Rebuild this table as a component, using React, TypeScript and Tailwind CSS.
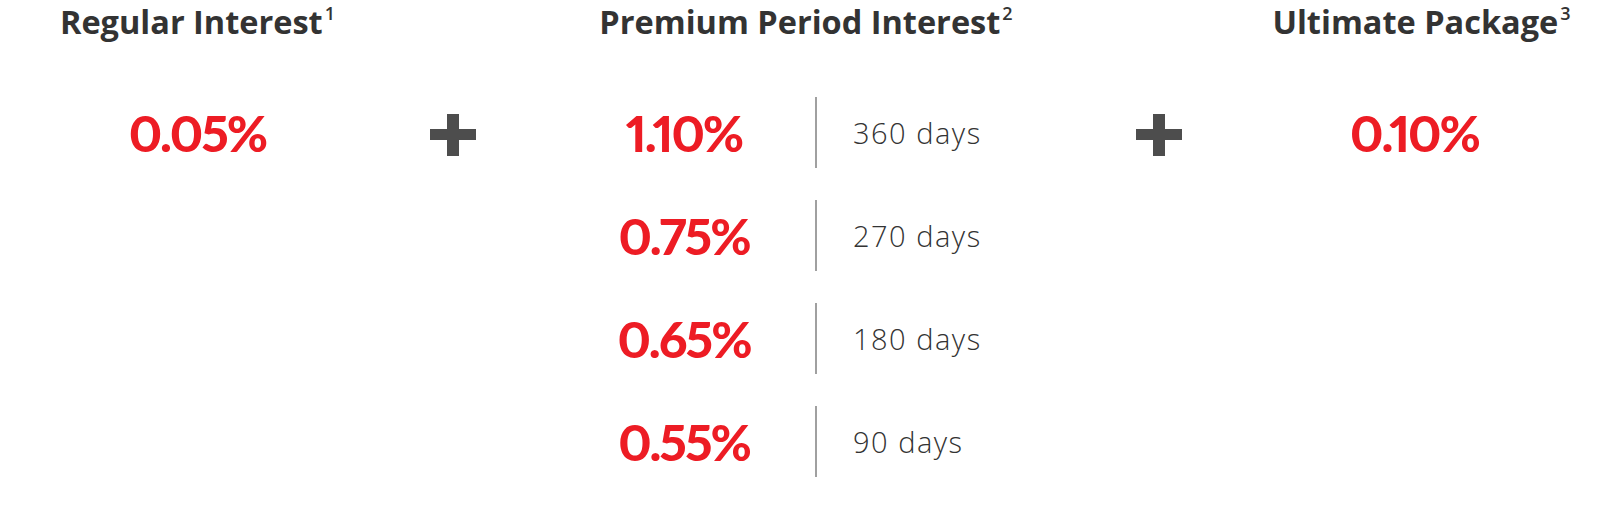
const PERIODS = [
  { rate: '1.10%', days: '360 days' },
  { rate: '0.75%', days: '270 days' },
  { rate: '0.65%', days: '180 days' },
  { rate: '0.55%', days: '90 days' },
]

function Heading({ text, note, className = '' }: { text: string; note: string; className?: string }) {
  return (
    <h2
      className={`whitespace-nowrap text-center font-['Open_Sans',_'Liberation_Sans',_sans-serif] text-[32.5px] font-bold leading-[44px] text-[#333333] ${className}`}
    >
      {text}
      <sup className="top-[-14px] ml-[2px] text-[18px] font-semibold">{note}</sup>
    </h2>
  )
}

function Rate({ value }: { value: string }) {
  return (
    <span className="font-['Lato',_'Liberation_Sans',_sans-serif] text-[50px] font-black leading-none tracking-[-2px] text-[#ed1c24] proportional-nums">
      {value}
    </span>
  )
}

function Plus() {
  return (
    <div className="flex justify-center pt-[114px]">
      <svg width="46" height="42" viewBox="0 0 46 42" className="fill-[#4d4d4d]">
        <rect x="0" y="15" width="46" height="11" />
        <rect x="17" y="0" width="12" height="42" />
      </svg>
    </div>
  )
}

export default function App() {
  return (
    <div className="h-[514px] w-full bg-white">
      <div className="grid grid-cols-[395px_116px_590px_116px_1fr]">
        <div className="flex flex-col items-center">
          <Heading text="Regular Interest" note="1" />
          <div className="mt-[53px] flex h-[71px] items-center">
            <Rate value="0.05%" />
          </div>
        </div>

        <Plus />

        <div className="flex flex-col">
          <Heading text="Premium Period Interest" note="2" />
          <div className="mt-[53px] flex flex-col gap-[32px]">
            {PERIODS.map((p) => (
              <div key={p.days} className="flex h-[71px] items-center pl-[42px]">
                <div className="w-[262px] text-center">
                  <Rate value={p.rate} />
                </div>
                <div className="h-full w-[2px] bg-[#a0a0a0]" />
                <span className="pl-[36px] font-['Open_Sans',_'Liberation_Sans',_sans-serif] text-[29px] font-light tracking-[1.5px] text-[#333333]">
                  {p.days}
                </span>
              </div>
            ))}
          </div>
        </div>

        <Plus />

        <div className="flex flex-col items-center">
          <Heading text="Ultimate Package" note="3" className="pl-[14px]" />
          <div className="mt-[53px] flex h-[71px] items-center">
            <Rate value="0.10%" />
          </div>
        </div>
      </div>
    </div>
  )
}
